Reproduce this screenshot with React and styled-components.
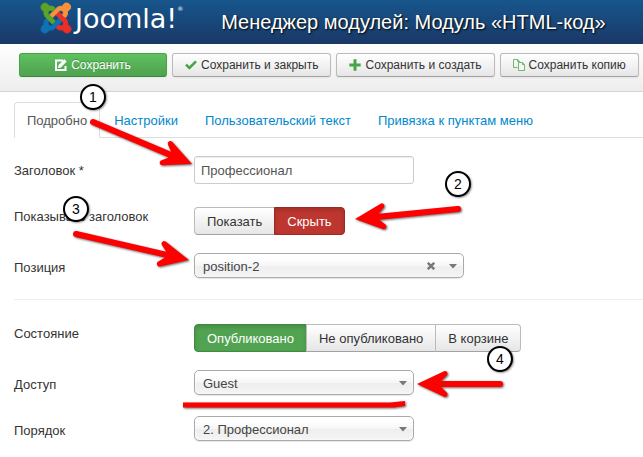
import React, { useState } from "react"
import styled, { createGlobalStyle, css } from "styled-components";

const TABS = ['Подробно', 'Настройки', 'Пользовательский текст', 'Привязка к пунктам меню'];

const STEPS = [
    { number: 1, x: 93, y: 97 },
    { number: 2, x: 458, y: 184 },
    { number: 3, x: 76, y: 209 },
    { number: 4, x: 500, y: 359 },
];

const ARROWS = [
    { from: [93, 122], to: [192, 164] },
    { from: [458, 209], to: [355, 219] },
    { from: [76, 234], to: [189, 260] },
    { from: [500, 384], to: [417, 384] },
];

const JoomlaMark = () => (
    <svg width="30" height="30" viewBox="0 0 24 24" strokeWidth="0.8" overflow="visible" aria-hidden="true">
        <path fill="#1071b5" stroke="#1071b5" d="M16.719 14.759L14.22 17.26l-2.37 2.37-.462.466c-1.368 1.365-3.297 1.83-5.047 1.397-.327 1.424-1.604 2.49-3.13 2.49C1.438 23.983 0 22.547 0 20.773c0-1.518 1.055-2.789 2.469-3.123-.446-1.76.016-3.705 1.396-5.08l.179-.18 2.37 2.37-.184.181c-.769.779-.769 2.024 0 2.789.771.78 2.022.78 2.787 0l.465-.465 2.367-2.371 2.502-2.506z" />
        <path fill="#ee2e24" stroke="#ee2e24" d="M17.643 21.411c-1.822.563-3.885.12-5.328-1.318l-.18-.185 2.365-2.369.18.184c.771.768 2.018.765 2.787 0 .765-.765.765-2.01-.004-2.781l-.466-.465-2.365-2.37-2.502-2.503L14.5 7.234l2.499 2.5 2.367 2.37.464.464c1.365 1.365 1.832 3.299 1.398 5.052C22.844 17.915 24 19.218 24 20.79 24 22.563 22.562 24 20.791 24c-1.574 0-2.872-1.138-3.148-2.589z" />
        <path fill="#f9913d" stroke="#f9913d" d="M6.975 9.461l2.508-2.505 2.37-2.369.462-.461c1.365-1.367 3.279-1.83 5.025-1.411C17.52 1.153 18.879 0 20.502 0c1.772 0 3.209 1.437 3.209 3.207 0 1.59-1.15 2.905-2.669 3.163.48 1.786.027 3.783-1.379 5.188l-.18.181-2.37-2.37.184-.183c.769-.765.769-2.01 0-2.775-.766-.781-2.018-.781-2.782 0l-.464.465-2.37 2.37-2.505 2.505z" />
        <path fill="#5aa426" stroke="#5aa426" d="M4.326 11.946l-.462-.465C2.5 10.12 2.03 8.2 2.45 6.45 1.05 6.1 0 4.84 0 3.33 0 1.56 1.438.12 3.21.12c1.52 0 2.79 1.06 3.13 2.47 1.74-.42 3.65.05 5.01 1.41l.18.18-2.37 2.37-.18-.18c-.77-.77-2.02-.77-2.79 0-.77.77-.77 2.01 0 2.78l.46.46 2.37 2.37 2.5 2.5-2.37 2.37-2.5-2.5z" />
    </svg>
);

const EditIcon = () => (
    <svg width="12" height="12" viewBox="0 0 12 12" aria-hidden="true">
        <path fill="none" stroke="#fff" strokeWidth="2" d="M8 1.5H1V11h9.5V7" />
        <path fill="#fff" d="M3 9l.6-2.9L9.3.3l2.4 2.3-5.8 5.8z" />
    </svg>
);

const CheckIcon = () => (
    <svg width="12" height="12" viewBox="0 0 12 12" aria-hidden="true">
        <path fill="none" stroke="#46a546" strokeWidth="2.6" d="M1 5.6l3.4 3.3L11 2.3" />
    </svg>
);

const PlusIcon = () => (
    <svg width="12" height="12" viewBox="0 0 12 12" aria-hidden="true">
        <path fill="none" stroke="#46a546" strokeWidth="3" d="M6 .3v11.4M.3 6h11.4" />
    </svg>
);

const CopyIcon = () => (
    <svg width="12" height="12" viewBox="0 0 12 12" aria-hidden="true">
        <path fill="none" stroke="#6db96d" d="M4.5 8.5h-4v-8h4.2l2 2v1M4.5.5v2h2" />
        <path fill="#f5f5f5" stroke="#6db96d" d="M5.5 3.5h4l2 2v6h-6zM9.5 3.5v2h2" />
    </svg>
);

const CaretIcon = () => (
    <svg width="8" height="5" viewBox="0 0 8 5" aria-hidden="true">
        <path fill="#777" d="M0 0h8L4 4.6z" />
    </svg>
);

const CrossIcon = () => (
    <svg width="8" height="8" viewBox="0 0 8 8" aria-hidden="true">
        <path stroke="#777" strokeWidth="2.4" d="M.8.8l6.4 6.4M7.2.8L.8 7.2" />
    </svg>
);

// the tip is at 0,0 and the shaft runs to the right before rotation
const Arrow = ({ from, to }) => {
    const dx = from[0] - to[0];
    const dy = from[1] - to[1];
    const length = Math.hypot(dx, dy);
    const angle = Math.atan2(dy, dx) * 180 / Math.PI;

    return (
        <path
            transform={`translate(${to[0]} ${to[1]}) rotate(${angle})`}
            d={`M0 0L27-12.8A2.6 2.6 0 0 1 30-8.8L24-3H${length}a3 3 0 0 1 0 6H24L30 8.8A2.6 2.6 0 0 1 27 12.8Z`}
        />
    );
};

const Select = ({ id, wide, clearable, children }) => (
    <SelectBox $wide={wide}>
        <SelectField id={id}>{children}</SelectField>
        <SelectIcons>
            {clearable && <ClearButton type='button' aria-label='Очистить'><CrossIcon /></ClearButton>}
            <CaretIcon />
        </SelectIcons>
    </SelectBox>
);

const RadioGroup = ({ name, label, options, initial }) => {
    const [value, setValue] = useState(initial);

    return (
        <ButtonGroup role='radiogroup' aria-labelledby={label}>
            {options.map(({ text, tone }) => (
                <RadioButton key={text} $tone={value === text ? tone : null}>
                    <RadioInput type='radio' name={name} checked={value === text} onChange={() => setValue(text)} />
                    {text}
                </RadioButton>
            ))}
        </ButtonGroup>
    );
};

const App = () => {
    return (
        <Page>
            <GlobalStyle />
            <Header>
                <Logo>
                    <JoomlaMark />
                    <LogoText>Joomla!<LogoReg>®</LogoReg></LogoText>
                </Logo>
                <PageTitle>Менеджер модулей: Модуль «HTML-код»</PageTitle>
            </Header>

            <Toolbar>
                <ToolButton type='button' $primary><EditIcon />Сохранить</ToolButton>
                <ToolButton type='button'><CheckIcon />Сохранить и закрыть</ToolButton>
                <ToolButton type='button'><PlusIcon />Сохранить и создать</ToolButton>
                <ToolButton type='button'><CopyIcon />Сохранить копию</ToolButton>
            </Toolbar>

            <Content>
                <Tabs>
                    {TABS.map((tab, i) => (
                        <Tab key={tab} href='#' $active={i === 0}>{tab}</Tab>
                    ))}
                </Tabs>

                <Row>
                    <Label htmlFor='title'>Заголовок *</Label>
                    <TextInput id='title' type='text' defaultValue='Профессионал' />
                </Row>
                <Row>
                    <Label as='span' id='showtitle'>Показывать заголовок</Label>
                    <RadioGroup
                        name='showtitle'
                        label='showtitle'
                        initial='Скрыть'
                        options={[
                            { text: 'Показать', tone: 'green' },
                            { text: 'Скрыть', tone: 'red' },
                        ]}
                    />
                </Row>
                <Row>
                    <Label htmlFor='position'>Позиция</Label>
                    <Select id='position' wide clearable>
                        <option>position-2</option>
                    </Select>
                </Row>

                <Divider />

                <Row>
                    <Label as='span' id='state'>Состояние</Label>
                    <RadioGroup
                        name='state'
                        label='state'
                        initial='Опубликовано'
                        options={[
                            { text: 'Опубликовано', tone: 'green' },
                            { text: 'Не опубликовано', tone: 'red' },
                            { text: 'В корзине', tone: 'red' },
                        ]}
                    />
                </Row>
                <Row>
                    <Label htmlFor='access'>Доступ</Label>
                    <Select id='access'>
                        <option>Guest</option>
                    </Select>
                </Row>
                <Row>
                    <Label htmlFor='order'>Порядок</Label>
                    <Select id='order'>
                        <option>2. Профессионал</option>
                    </Select>
                </Row>
            </Content>

            <Marks viewBox="0 0 643 457" aria-hidden="true">
                {ARROWS.map((arrow) => <Arrow key={arrow.to.join()} {...arrow} />)}
                <path d="M183 402.5H390L405 401V406L394 407.5H183z" />
            </Marks>
            {STEPS.map(({ number, x, y }) => (
                <Step key={number} style={{ left: x, top: y }}>{number}</Step>
            ))}
        </Page>
    );
}

const GlobalStyle = createGlobalStyle`
    * {
        box-sizing: border-box;
    }

    body {
        margin: 0;
        background: #fff;
        color: #333;
        font-family: "Liberation Sans", Arial, sans-serif;
        font-size: 13px;
        line-height: 18px;
    }

    button, input, select {
        font: inherit;
    }
`

const Page = styled.div`
    position: relative;
    overflow: hidden;
    padding-bottom: 12px;
`

const Header = styled.header`
    display: flex;
    align-items: center;
    gap: 38px;
    height: 44px;
    padding: 0 20px 0 41px;
    background: linear-gradient(#17568c, #1a3867);
    color: #fff;
    white-space: nowrap;
`

const Logo = styled.div`
    display: flex;
    gap: 4px;
    height: 38px;
`

const LogoText = styled.div`
    display: flex;
    font-family: "DejaVu Sans", sans-serif;
    font-size: 27px;
    line-height: 32px;
`

const LogoReg = styled.sup`
    font-size: 6px;
    line-height: 12px;
`

const PageTitle = styled.h1`
    margin: 0;
    font-size: 20px;
    font-weight: normal;
    line-height: 36px;
    text-shadow: 1px 1px 2px #000;
`

const Toolbar = styled.div`
    display: flex;
    gap: 5px;
    padding: 9px 4px 14px 19px;
    border-bottom: 1px solid #d4d4d4;
    background: linear-gradient(#fff, #ededed);
`

const ToolButton = styled.button`
    display: flex;
    flex-shrink: 0;
    align-items: center;
    justify-content: center;
    gap: 4px;
    height: 24px;
    padding: 0 12px;
    border: 1px solid #bbb;
    border-bottom-color: #a2a2a2;
    border-radius: 3px;
    background: linear-gradient(#fff, #e6e6e6);
    box-shadow: 0 1px 2px rgba(0, 0, 0, 0.05);
    color: #333;
    font-size: 12px;
    white-space: nowrap;
    cursor: pointer;

    ${({ $primary }) => $primary && css`
        width: 148px;
        border-color: #46a546 #46a546 #3b8a3b;
        background: linear-gradient(#5fc15f, #4fa14f);
        color: #fff;
        text-shadow: 0 -1px 0 rgba(0, 0, 0, 0.25);
    `}
`

const Content = styled.main`
    padding: 10px 0 0 14px;
`

const Tabs = styled.nav`
    display: flex;
    gap: 1px;
    margin-bottom: 18px;
    border-bottom: 1px solid #ddd;
`

const Tab = styled.a`
    margin-bottom: -1px;
    padding: 9px 12px 7px;
    border: 1px solid transparent;
    border-radius: 4px 4px 0 0;
    color: #08c;
    text-decoration: none;
    white-space: nowrap;

    ${({ $active }) => $active && css`
        border-color: #ddd #ddd #fff;
        background: #fff;
        color: #555;
    `}
`

const Row = styled.div`
    display: grid;
    grid-template-columns: 180px 1fr;
    align-items: start;
    min-height: 28px;
    margin-bottom: 18px;
`

const Label = styled.label`
    padding-top: 6px;
`

const TextInput = styled.input`
    width: 220px;
    height: 28px;
    padding: 4px 6px;
    border: 1px solid #ccc;
    border-radius: 3px;
    box-shadow: inset 0 1px 1px rgba(0, 0, 0, 0.075);
    color: #555;
`

const ButtonGroup = styled.div`
    display: flex;
    padding-top: 5px;
`

const TONES = {
    green: css`
        border-color: #3f8a3f;
        background: #51a351;
    `,
    red: css`
        border-color: #9b2a24;
        background: #bd362f;
    `,
};

const RadioButton = styled.label`
    padding: 5px 12px 3px;
    border: 1px solid #bbb;
    border-bottom-color: #a2a2a2;
    background: linear-gradient(#fff, #e6e6e6);
    white-space: nowrap;
    cursor: pointer;

    & + & {
        margin-left: -1px;
    }

    &:first-child {
        border-radius: 4px 0 0 4px;
    }

    &:last-child {
        border-radius: 0 4px 4px 0;
    }

    ${({ $tone }) => $tone && css`
        ${TONES[$tone]}
        box-shadow: inset 0 2px 4px rgba(0, 0, 0, 0.15);
        color: #fff;
    `}
`

const RadioInput = styled.input`
    position: absolute;
    width: 1px;
    height: 1px;
    margin: 0;
    opacity: 0;
`

const SelectBox = styled.div`
    position: relative;
    width: ${({ $wide }) => ($wide ? '270px' : '220px')};
`

const SelectField = styled.select`
    display: block;
    width: 100%;
    height: 25px;
    padding: 2px 48px 0 8px;
    appearance: none;
    border: 1px solid #aaa;
    border-radius: 5px;
    background: linear-gradient(#fff 20%, #f6f6f6 50%, #eee 52%, #f4f4f4 100%);
    box-shadow: inset 0 0 3px #fff, 0 1px 1px rgba(0, 0, 0, 0.1);
    color: #444;
`

const SelectIcons = styled.div`
    position: absolute;
    top: 0;
    right: 7px;
    display: flex;
    align-items: center;
    gap: 14px;
    height: 26px;
    pointer-events: none;
`

const ClearButton = styled.button`
    display: flex;
    padding: 0;
    border: none;
    background: none;
    cursor: pointer;
    pointer-events: auto;
`

const Divider = styled.hr`
    margin: 0 0 18px;
    border: 0;
    border-top: 1px solid #eee;
    border-bottom: 1px solid #fff;
`

const Marks = styled.svg`
    position: absolute;
    top: 0;
    left: 0;
    width: 643px;
    height: 457px;
    fill: #f00;
    filter: drop-shadow(1px 1px 1px rgba(0, 0, 0, 0.6));
    pointer-events: none;
`

const Step = styled.span`
    position: absolute;
    display: flex;
    align-items: center;
    justify-content: center;
    width: 26px;
    height: 26px;
    margin: -13px 0 0 -13px;
    border: 2px solid #000;
    border-radius: 50%;
    background: #fff;
    box-shadow: 1px 1px 2px rgba(0, 0, 0, 0.4);
    color: #000;
    font-size: 14px;
`

export default App
